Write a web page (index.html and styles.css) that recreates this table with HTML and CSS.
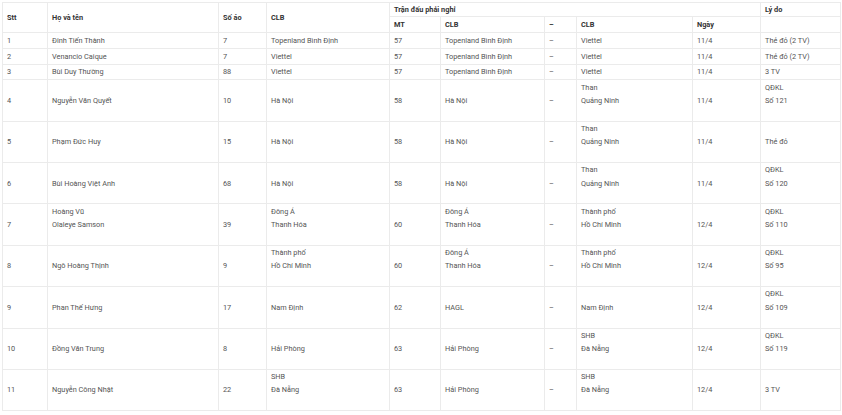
FILE: index.html
```html
<!DOCTYPE html>
<html lang="vi">
<head>
<meta charset="utf-8">
<title>Danh sách cầu thủ bị treo giò</title>
<link rel="stylesheet" href="styles.css">
</head>
<body>
<table class="sheet">
  <colgroup>
    <col class="c-stt"><col class="c-name"><col class="c-num"><col class="c-club">
    <col class="c-mt"><col class="c-club2"><col class="c-dash"><col class="c-club3">
    <col class="c-date"><col class="c-reason">
  </colgroup>
  <thead>
    <tr class="hrow1">
      <th rowspan="2">Stt</th>
      <th rowspan="2">Họ và tên</th>
      <th rowspan="2">Số áo</th>
      <th rowspan="2">CLB</th>
      <th colspan="5">Trận đấu phải nghỉ</th>
      <th>Lý do</th>
    </tr>
    <tr class="hrow2">
      <th>MT</th>
      <th>CLB</th>
      <th>–</th>
      <th>CLB</th>
      <th>Ngày</th>
      <th></th>
    </tr>
  </thead>
  <tbody>
    <tr class="short">
      <td>1</td><td>Đinh Tiến Thành</td><td>7</td><td>Topenland Bình Định</td><td>57</td><td>Topenland Bình Định</td><td>–</td><td>Viettel</td><td>11/4</td><td>Thẻ đỏ (2 TV)</td>
    </tr>
    <tr class="short">
      <td>2</td><td>Venancio Caique</td><td>7</td><td>Viettel</td><td>57</td><td>Topenland Bình Định</td><td>–</td><td>Viettel</td><td>11/4</td><td>Thẻ đỏ (2 TV)</td>
    </tr>
    <tr class="short">
      <td>3</td><td>Bùi Duy Thường</td><td>88</td><td>Viettel</td><td>57</td><td>Topenland Bình Định</td><td>–</td><td>Viettel</td><td>11/4</td><td>3 TV</td>
    </tr>
    <tr class="tall">
      <td>4</td><td>Nguyễn Văn Quyết</td><td>10</td><td>Hà Nội</td><td>58</td><td>Hà Nội</td><td>–</td><td><div class="two">Than<br>Quảng Ninh</div></td><td>11/4</td><td><div class="two">QĐKL<br>Số 121</div></td>
    </tr>
    <tr class="tall">
      <td>5</td><td>Phạm Đức Huy</td><td>15</td><td>Hà Nội</td><td>58</td><td>Hà Nội</td><td>–</td><td><div class="two">Than<br>Quảng Ninh</div></td><td>11/4</td><td>Thẻ đỏ</td>
    </tr>
    <tr class="tall">
      <td>6</td><td>Bùi Hoàng Việt Anh</td><td>68</td><td>Hà Nội</td><td>58</td><td>Hà Nội</td><td>–</td><td><div class="two">Than<br>Quảng Ninh</div></td><td>11/4</td><td><div class="two">QĐKL<br>Số 120</div></td>
    </tr>
    <tr class="tall">
      <td>7</td><td><div class="two">Hoàng Vũ<br>Olaleye Samson</div></td><td>39</td><td><div class="two">Đông Á<br>Thanh Hóa</div></td><td>60</td><td><div class="two">Đông Á<br>Thanh Hóa</div></td><td>–</td><td><div class="two">Thành phố<br>Hồ Chí Minh</div></td><td>12/4</td><td><div class="two">QĐKL<br>Số 110</div></td>
    </tr>
    <tr class="tall">
      <td>8</td><td>Ngô Hoàng Thịnh</td><td>9</td><td><div class="two">Thành phố<br>Hồ Chí Minh</div></td><td>60</td><td><div class="two">Đông Á<br>Thanh Hóa</div></td><td>–</td><td><div class="two">Thành phố<br>Hồ Chí Minh</div></td><td>12/4</td><td><div class="two">QĐKL<br>Số 95</div></td>
    </tr>
    <tr class="tall">
      <td>9</td><td>Phan Thế Hưng</td><td>17</td><td>Nam Định</td><td>62</td><td>HAGL</td><td>–</td><td>Nam Định</td><td>12/4</td><td><div class="two">QĐKL<br>Số 109</div></td>
    </tr>
    <tr class="tall">
      <td>10</td><td>Đồng Văn Trung</td><td>8</td><td>Hải Phòng</td><td>63</td><td>Hải Phòng</td><td>–</td><td><div class="two">SHB<br>Đà Nẵng</div></td><td>12/4</td><td><div class="two">QĐKL<br>Số 119</div></td>
    </tr>
    <tr class="tall">
      <td>11</td><td>Nguyễn Công Nhật</td><td>22</td><td><div class="two">SHB<br>Đà Nẵng</div></td><td>63</td><td>Hải Phòng</td><td>–</td><td><div class="two">SHB<br>Đà Nẵng</div></td><td>12/4</td><td>3 TV</td>
    </tr>
  </tbody>
</table>
</body>
</html>
```

FILE: styles.css
```css
html, body {
  margin: 0;
  background: #fff;
}
body {
  padding: 2px 0 0 2px;
  font-family: Roboto, "Noto Sans", sans-serif;
  font-size: 7.33px;
  color: #555;
}
.sheet {
  border-collapse: collapse;
  table-layout: fixed;
  width: 839px;
}
.c-stt { width: 45px; }
.c-name { width: 171px; }
.c-num { width: 48px; }
.c-club { width: 123px; }
.c-mt { width: 51px; }
.c-club2 { width: 104px; }
.c-dash { width: 32px; }
.c-club3 { width: 116px; }
.c-date { width: 68px; }
.c-reason { width: 80px; }

.sheet th,
.sheet td {
  border: 1px solid #ebebeb;
  padding: 0 4px;
  line-height: 13.3px;
  text-align: left;
  vertical-align: middle;
  white-space: nowrap;
  overflow: hidden;
}
.sheet th {
  font-weight: bold;
  color: #333;
}
.hrow1 { height: 14px; }
.hrow2 { height: 16px; }
.short { height: 15.67px; }
.tall { height: 41.375px; }
.two { padding-bottom: 13.3px; }
```
